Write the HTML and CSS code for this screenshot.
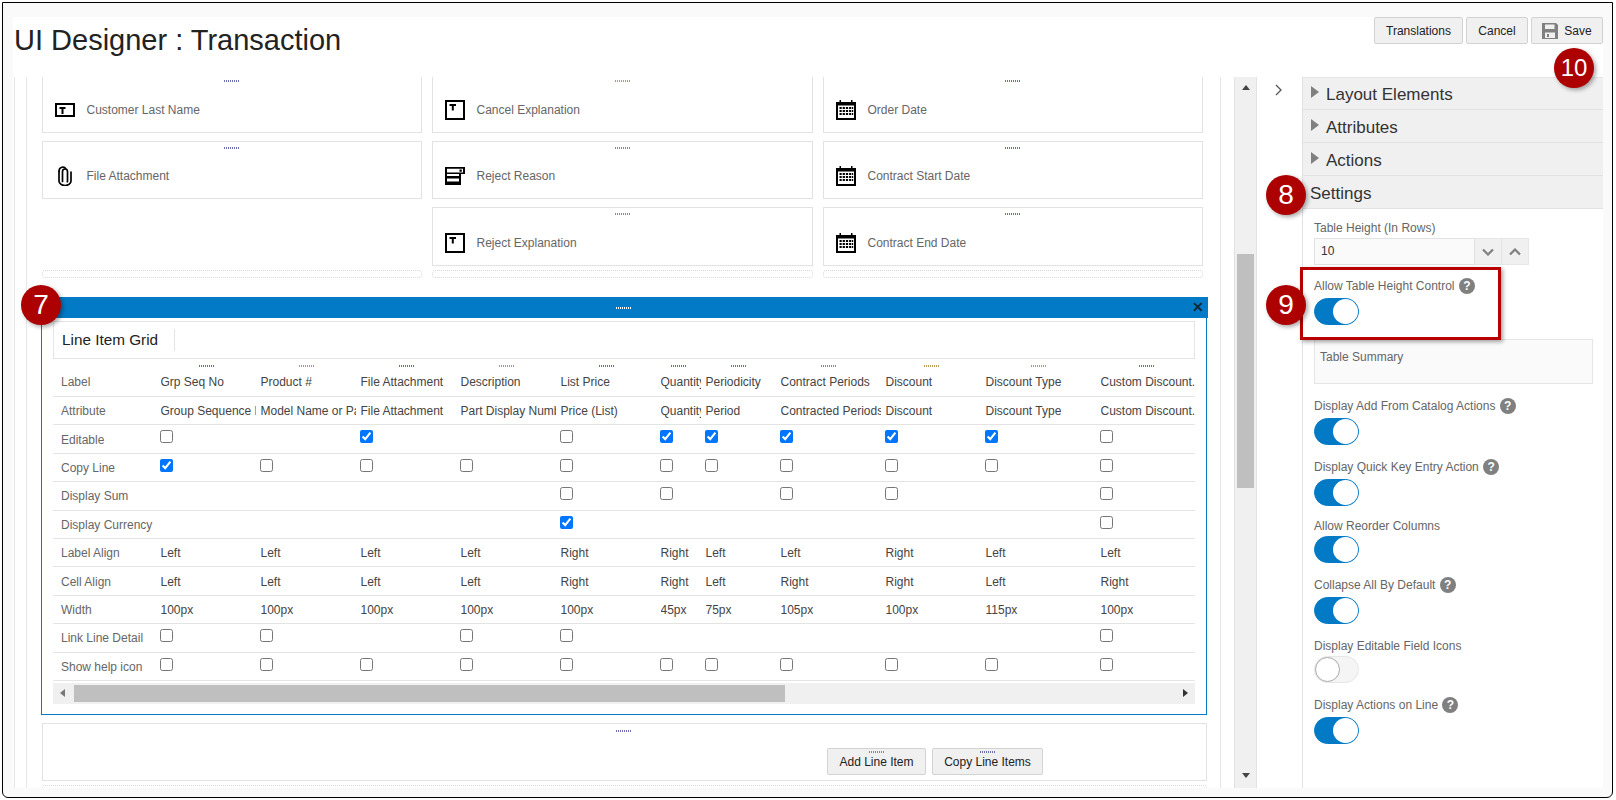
FILE: index.html
```html
<!DOCTYPE html>
<html lang="en">
<head>
<meta charset="utf-8">
<title>UI Designer : Transaction</title>
<link rel="stylesheet" href="styles.css">
</head>
<body>
<svg class="defs" width="0" height="0" aria-hidden="true">
  <symbol id="i-text-h" viewBox="0 0 20 14"><path fill-rule="evenodd" d="M0 0h20v14H0zM2 2v10h16V2z"/><path d="M4.500 4h6v2H8.500v5h-2V6h-2z"/></symbol>
  <symbol id="i-text-v" viewBox="0 0 20 20"><path fill-rule="evenodd" d="M0 0h20v20H0zM2 2v16h16V2z"/><path d="M4.500 4h6.500v2H8.800v4.500H6.800V6H4.500z"/></symbol>
  <symbol id="i-clip" viewBox="0 0 14 20"><path fill="none" stroke="#000" stroke-width="1.700" stroke-linecap="round" d="M4.500 15.500V5.500a2.500 2.500 0 0 1 5 0V15a1.700 1.700 0 0 1-.2.800M1 5.500v9.500a6 4.500 0 0 0 12 0V6"/><path fill="none" stroke="#000" stroke-width="1.700" d="M1 6V5a3.800 4 0 0 1 7-2"/></symbol>
  <symbol id="i-select" viewBox="0 0 20 18"><path fill-rule="evenodd" d="M0 0h20v7h-4v11H0zM2 1.700v3.800h16V1.700zM2 7v2h12V7zM2 11.500v3h12v-3z"/><path d="M14.500 2.500h2.300v2.200h-2.300z"/></symbol>
  <symbol id="i-cal" viewBox="0 0 20 20"><path fill-rule="evenodd" d="M0 2h3.500V0h1.500v2h10V0h1.500v2H20v18H0zM2 5.500V18h16V5.500z"/><path d="M3.500 7h2.200v2H3.500zM6.700 7h2.200v2H6.700zM9.900 7h2.200v2H9.900zM13.100 7h2.200v2h-2.200zM16 7h1.200v2H16zM3.500 10h2.200v2H3.500zM6.700 10h2.200v2H6.700zM9.900 10h2.200v2H9.900zM13.100 10h2.200v2h-2.200zM16 10h1.200v2H16zM3.500 13h2.200v2H3.500zM6.700 13h2.200v2H6.700zM9.900 13h2.200v2H9.900zM13.100 13h2.200v2h-2.200zM16 13h1.200v2H16z"/></symbol>
</svg>

<div class="frame">
  <div class="top-strip"></div>

  <header class="header">
    <h1 class="title">UI Designer : Transaction</h1>
    <div class="actions">
      <button class="btn btn-wide">Translations</button>
      <button class="btn btn-cancel">Cancel</button>
      <button class="btn btn-save">
        <svg class="save-icon" viewBox="0 0 16 16"><path fill="#808080" fill-rule="evenodd" d="M0 0h14l2 2v14H0zM3 1.500V6h9.500V1.500zM3 9.500V15h10V9.500z"/><path fill="#808080" d="M5 11h2v3H5z"/></svg>
        Save
      </button>
    </div>
  </header>

  <div class="main">
    <div class="canvas">
      <div class="scrollarea">
        <div class="cards">
          <div class="card"><i class="handle h-b"></i><div class="field"><svg class="ico ico-h"><use href="#i-text-h"/></svg><span>Customer Last Name</span></div></div>
          <div class="card"><i class="handle h-o"></i><div class="field"><svg class="ico ico-v"><use href="#i-text-v"/></svg><span>Cancel Explanation</span></div></div>
          <div class="card"><i class="handle h-b"></i><div class="field"><svg class="ico ico-v"><use href="#i-cal"/></svg><span>Order Date</span></div></div>

          <div class="card"><i class="handle h-b"></i><div class="field"><svg class="ico ico-v"><use href="#i-clip"/></svg><span>File Attachment</span></div></div>
          <div class="card"><i class="handle h-g"></i><div class="field"><svg class="ico ico-v"><use href="#i-select"/></svg><span>Reject Reason</span></div></div>
          <div class="card"><i class="handle h-b"></i><div class="field"><svg class="ico ico-v"><use href="#i-cal"/></svg><span>Contract Start Date</span></div></div>

          <div class="card-gap"></div>
          <div class="card"><i class="handle h-g"></i><div class="field"><svg class="ico ico-v"><use href="#i-text-v"/></svg><span>Reject Explanation</span></div></div>
          <div class="card"><i class="handle h-b"></i><div class="field"><svg class="ico ico-v"><use href="#i-cal"/></svg><span>Contract End Date</span></div></div>

          <div class="slot"></div>
          <div class="slot"></div>
          <div class="slot"></div>
        </div>

        <section class="grid-panel">
          <div class="grid-bar"><i class="handle h-w"></i><span class="close">✕</span></div>
          <div class="grid-body">
            <div class="grid-title"><span>Line Item Grid</span></div>
            <div class="tbl">
              <div class="row row-handles">
                <span></span>
                <span class="hc"><i class="handle h-b"></i></span><span class="hc"><i class="handle h-o"></i></span><span class="hc"><i class="handle h-b"></i></span><span class="hc"><i class="handle h-o"></i></span><span class="hc"><i class="handle h-b"></i></span><span class="hc"><i class="handle h-b"></i></span><span class="hc"><i class="handle h-b"></i></span><span class="hc"><i class="handle h-g"></i></span><span class="hc"><i class="handle h-o"></i></span><span class="hc"><i class="handle h-o"></i></span><span class="hc"><i class="handle h-b"></i></span>
              </div>
              <div class="row row-first">
                <span class="rl">Label</span><span>Grp Seq No</span><span>Product #</span><span>File Attachment</span><span>Description</span><span>List Price</span><span>Quantity</span><span>Periodicity</span><span>Contract Periods</span><span>Discount</span><span>Discount Type</span><span>Custom Discount...</span>
              </div>
              <div class="row">
                <span class="rl">Attribute</span><span>Group Sequence Number</span><span>Model Name or Part</span><span>File Attachment</span><span>Part Display Number</span><span>Price (List)</span><span>Quantity</span><span>Period</span><span>Contracted Periods</span><span>Discount</span><span>Discount Type</span><span>Custom Discount...</span>
              </div>
              <div class="row">
                <span class="rl">Editable</span><input type="checkbox"><span></span><input type="checkbox" checked><span></span><input type="checkbox"><input type="checkbox" checked><input type="checkbox" checked><input type="checkbox" checked><input type="checkbox" checked><input type="checkbox" checked><input type="checkbox">
              </div>
              <div class="row">
                <span class="rl">Copy Line</span><input type="checkbox" checked><input type="checkbox"><input type="checkbox"><input type="checkbox"><input type="checkbox"><input type="checkbox"><input type="checkbox"><input type="checkbox"><input type="checkbox"><input type="checkbox"><input type="checkbox">
              </div>
              <div class="row">
                <span class="rl">Display Sum</span><span></span><span></span><span></span><span></span><input type="checkbox"><input type="checkbox"><span></span><input type="checkbox"><input type="checkbox"><span></span><input type="checkbox">
              </div>
              <div class="row">
                <span class="rl">Display Currency</span><span></span><span></span><span></span><span></span><input type="checkbox" checked><span></span><span></span><span></span><span></span><span></span><input type="checkbox">
              </div>
              <div class="row">
                <span class="rl">Label Align</span><span>Left</span><span>Left</span><span>Left</span><span>Left</span><span>Right</span><span>Right</span><span>Left</span><span>Left</span><span>Right</span><span>Left</span><span>Left</span>
              </div>
              <div class="row">
                <span class="rl">Cell Align</span><span>Left</span><span>Left</span><span>Left</span><span>Left</span><span>Right</span><span>Right</span><span>Left</span><span>Right</span><span>Right</span><span>Left</span><span>Right</span>
              </div>
              <div class="row">
                <span class="rl">Width</span><span>100px</span><span>100px</span><span>100px</span><span>100px</span><span>100px</span><span>45px</span><span>75px</span><span>105px</span><span>100px</span><span>115px</span><span>100px</span>
              </div>
              <div class="row">
                <span class="rl">Link Line Detail</span><input type="checkbox"><input type="checkbox"><span></span><input type="checkbox"><input type="checkbox"><span></span><span></span><span></span><span></span><span></span><input type="checkbox">
              </div>
              <div class="row">
                <span class="rl">Show help icon</span><input type="checkbox"><input type="checkbox"><input type="checkbox"><input type="checkbox"><input type="checkbox"><input type="checkbox"><input type="checkbox"><input type="checkbox"><input type="checkbox"><input type="checkbox"><input type="checkbox">
              </div>
            </div>
            <div class="hscroll">
              <span class="tri tri-left"></span>
              <span class="hthumb"></span>
              <span class="tri tri-right"></span>
            </div>
          </div>
        </section>

        <div class="footer-card">
          <i class="handle h-b"></i>
          <div class="footer-actions">
            <button class="btn btn-line"><i class="handle h-g"></i>Add Line Item</button>
            <button class="btn btn-copy"><i class="handle h-b"></i>Copy Line Items</button>
          </div>
        </div>
        <div class="slot slot-wide"></div>
      </div>
    </div>

    <div class="vscroll">
      <span class="tri tri-up"></span>
      <span class="vthumb"></span>
      <span class="tri tri-down"></span>
    </div>

    <div class="chev-col">
      <svg class="chev" viewBox="0 0 8 12"><path fill="none" stroke="#555" stroke-width="1.300" d="M1 1l5 5-5 5"/></svg>
    </div>

    <aside class="panel">
      <div class="acc"><span class="tri tri-acc"></span>Layout Elements</div>
      <div class="acc"><span class="tri tri-acc"></span>Attributes</div>
      <div class="acc"><span class="tri tri-acc"></span>Actions</div>
      <div class="acc acc-open">Settings</div>

      <div class="settings">
        <div class="lbl lbl-first">Table Height (In Rows)</div>
        <div class="stepper">
          <span class="stepper-val">10</span>
          <span class="step"><svg viewBox="0 0 12 8"><path fill="none" stroke="#808080" stroke-width="2.200" d="M1 1.500l5 5 5-5"/></svg></span>
          <span class="step"><svg viewBox="0 0 12 8"><path fill="none" stroke="#808080" stroke-width="2.200" d="M1 6.500l5-5 5 5"/></svg></span>
        </div>

        <div class="opt">
          <div class="lbl lbl-help">Allow Table Height Control <b class="help">?</b></div>
          <div class="toggle"><i class="knob"></i></div>
        </div>

        <div class="summary">Table Summary</div>

        <div class="opt">
          <div class="lbl lbl-help">Display Add From Catalog Actions <b class="help">?</b></div>
          <div class="toggle"><i class="knob"></i></div>
        </div>
        <div class="opt">
          <div class="lbl lbl-help">Display Quick Key Entry Action <b class="help">?</b></div>
          <div class="toggle"><i class="knob"></i></div>
        </div>
        <div class="opt">
          <div class="lbl">Allow Reorder Columns</div>
          <div class="toggle"><i class="knob"></i></div>
        </div>
        <div class="opt opt-tall">
          <div class="lbl lbl-help">Collapse All By Default <b class="help">?</b></div>
          <div class="toggle"><i class="knob"></i></div>
        </div>
        <div class="opt">
          <div class="lbl">Display Editable Field Icons</div>
          <div class="toggle toggle-off"><i class="knob"></i></div>
        </div>
        <div class="opt">
          <div class="lbl lbl-help">Display Actions on Line <b class="help">?</b></div>
          <div class="toggle"><i class="knob"></i></div>
        </div>
      </div>
    </aside>
  </div>

  <div class="highlight"></div>
  <div class="badge badge-7">7</div>
  <div class="badge badge-8">8</div>
  <div class="badge badge-9">9</div>
  <div class="badge badge-10">10</div>
</div>
</body>
</html>
```

FILE: styles.css
```css
* { box-sizing: border-box; }
html, body { margin: 0; padding: 0; background: #fff; overflow: hidden; }
body { width: 1616px; height: 800px; font-family: "Liberation Sans", Arial, sans-serif; font-size: 12px; color: #333; }
.defs { position: absolute; }

.frame {
  position: relative;
  width: 1611px;
  height: 796px;
  margin: 2px 0 0 2px;
  border: 1px solid #000;
  border-radius: 0 0 6px 6px;
  background: #fafafa;
  display: flex;
  flex-direction: column;
  overflow: hidden;
}
.top-strip { height: 14px; flex: none; }

.header {
  flex: none;
  height: 60px;
  margin: 0 9px 0 10px;
  background: #fff;
  display: flex;
  justify-content: space-between;
  align-items: flex-start;
}
.title { margin: 6px 0 0 1px; font-size: 29px; line-height: 34px; font-weight: 400; color: #222; }
.actions { display: flex; gap: 3px; }

.btn {
  height: 27px;
  padding: 0;
  border: 1px solid #d2d2d2;
  border-radius: 2px;
  background: #f0f0f0;
  color: #222;
  font: 12px "Liberation Sans", Arial, sans-serif;
  display: flex;
  align-items: center;
  justify-content: center;
  position: relative;
}
.btn-wide { width: 89px; }
.btn-cancel { width: 62px; }
.btn-save { width: 72px; gap: 6px; }
.save-icon { width: 16px; height: 16px; }

.main {
  flex: none;
  height: 711px;
  margin: 0 9px 0 10px;
  background: #fff;
  display: flex;
}

.canvas {
  flex: none;
  width: 1208px;
  padding-left: 1px;
  border-right: 1px solid #e6e6e6;
  overflow: hidden;
}
.scrollarea {
  width: 1193px;
  height: 714px;
  margin-top: -3px;
  padding: 0 0 0 27px;
  border-left: 1px solid #e6e6e6;
  background: linear-gradient(#e6e6e6, #e6e6e6) 11px 0 / 1px 100% no-repeat;
}

.cards {
  display: grid;
  grid-template-columns: 380px 381px 380px;
  grid-template-rows: 58.500px 58.500px 58.500px 8px;
  column-gap: 10px;
  row-gap: 8px;
}
.card {
  border: 1px solid #e2e2e2;
  background: #fff;
  position: relative;
  display: flex;
  align-items: center;
}
.field { display: flex; align-items: center; padding: 13px 0 0 12px; color: #666; }
.ico { width: 20px; height: 20px; margin-right: 11.500px; flex: none; }
.ico-h { height: 14px; }
.handle {
  display: block;
  width: 16px;
  height: 2px;
  background-repeat: repeat-x;
}
.card > .handle { position: absolute; top: 5px; left: 50%; margin-left: -8px; }
.h-b { background-image: repeating-linear-gradient(90deg, #6a6fa8 0 1px, transparent 1px 2px); }
.h-o { background-image: repeating-linear-gradient(90deg, #b89a5c 0 1px, transparent 1px 2px); }
.h-g { background-image: repeating-linear-gradient(90deg, #8a8a8a 0 1px, transparent 1px 2px); }
.h-w { background-image: repeating-linear-gradient(90deg, #fff 0 1px, transparent 1px 2px); }

.slot {
  height: 8px;
  margin-top: -3.500px;
  border: 1px dotted #d8d8d8;
  border-radius: 3px;
}

.grid-panel {
  width: 1166px;
  height: 418px;
  margin: 15.500px 0 0 -1px;
  border: 1.500px solid #0a7ac2;
  border-top: 0;
}
.grid-bar {
  height: 21px;
  margin: 0 -1.500px;
  background: #027ac6;
  display: flex;
  align-items: center;
  justify-content: center;
  position: relative;
}
.close { position: absolute; right: 4px; top: 1px; font-size: 14px; line-height: 18px; font-weight: 700; color: #0f2a3d; }
.grid-body { padding: 3px 0 0 11px; width: 1154px; }
.grid-title {
  height: 38px;
  border: 1px solid #e4e4e4;
  display: flex;
  align-items: center;
  padding-left: 8px;
  width: 1142px;
}
.grid-title span {
  font-size: 15.300px;
  color: #222;
  height: 22px;
  line-height: 22px;
  padding-right: 16px;
  border-right: 1px solid #e4e4e4;
}

.tbl { width: 1142px; overflow: hidden; }
.row {
  display: grid;
  grid-template-columns: 107.500px 100px 100px 100px 100px 100px 45px 75px 105px 100px 115px 100px;
  height: 28.400px;
  align-items: center;
  border-bottom: 1px solid #e4e4e4;
  width: 1147.500px;
}
.row > span { margin-right: 5px; padding-top: 2px; white-space: nowrap; overflow: hidden; color: #444; line-height: 15px; }
.row > .rl { margin: 0 0 0 8px; color: #666; }
.row > input { margin: 5px 0 0 -1px; width: 13px; height: 13px; align-self: start; }
.row-handles { height: 9px; border-bottom: 0; align-items: end; }
.row-handles > .hc { margin-right: 8px; display: flex; justify-content: center; overflow: visible; height: 9px; padding-top: 6px; }
.row-first { height: 29px; }
.row-first > span { padding-top: 0; }

.hscroll {
  width: 1142px;
  height: 21px;
  margin-top: 2px;
  background: #f0f0f0;
  display: flex;
  align-items: center;
  position: relative;
}
.hthumb { width: 711px; height: 17px; margin-left: 20.500px; background: #bfbfbf; }
.tri { display: block; width: 0; height: 0; flex: none; border-style: solid; border-color: transparent; }
.tri-left { position: absolute; left: 7px; top: 6px; border-width: 4.500px 5px 4.500px 0; border-right-color: #777; }
.tri-right { position: absolute; right: 7px; top: 6px; border-width: 4.500px 0 4.500px 5px; border-left-color: #333; }

.footer-card {
  width: 1165px;
  height: 58px;
  margin-top: 8px;
  border: 1px solid #e2e2e2;
  position: relative;
  display: flex;
  justify-content: flex-end;
}
.footer-card > .handle { position: absolute; top: 6px; left: 50%; margin-left: -8.500px; }
.footer-actions { display: flex; gap: 6px; margin: 24px 163px 0 0; }
.btn-line { width: 99px; }
.btn-copy { width: 111px; }
.btn > .handle { position: absolute; top: 2px; left: 50%; margin-left: -8px; }
.slot-wide { width: 1165px; height: 8px; margin-top: 4px; }

.vscroll {
  flex: none;
  width: 23px;
  margin-left: 13px;
  background: #f0f0f0;
  border-left: 1px solid #e2e2e2;
  border-right: 1px solid #e2e2e2;
  display: flex;
  flex-direction: column;
  align-items: center;
}
.tri-up { margin-top: 8px; border-width: 0 4.500px 5px; border-bottom-color: #444; }
.vthumb { width: 17px; height: 234px; margin-top: 164px; background: #bfbfbf; }
.tri-down { margin-top: auto; margin-bottom: 10px; border-width: 5px 4.500px 0; border-top-color: #444; }

.chev-col { flex: none; width: 45px; display: flex; justify-content: center; padding-top: 7px; }
.chev { width: 8px; height: 12px; margin-left: -2px; }

.panel { flex: none; width: 301px; border-left: 1px solid #e2e2e2; }
.acc {
  height: 33px;
  padding: 4px 0 0 8px;
  background: #f0f0f0;
  border-bottom: 1px solid #e2e2e2;
  font-size: 17px;
  line-height: 28px;
  color: #333;
  display: flex;
  align-items: center;
}
.acc:first-child { border-top: 1px solid #e6e6e6; padding-top: 3px; }
.acc-open { padding-left: 7px; }
.tri-acc { margin: -6px 7px 0 0; border-width: 6.500px 0 6.500px 8px; border-left-color: #808080; }

.settings { padding: 12px 0 0 11px; }
.lbl { height: 14px; line-height: 14px; color: #666; display: flex; align-items: center; white-space: pre; }
.lbl-first { margin-bottom: 3px; }
.lbl-help { height: 18px; }
.help {
  width: 16px;
  height: 16px;
  margin-left: 1px;
  border-radius: 50%;
  background: #808080;
  color: #fff;
  font-size: 12px;
  line-height: 16px;
  text-align: center;
}
.stepper { display: flex; width: 215px; height: 27px; margin-bottom: 12px; }
.stepper-val {
  width: 162px;
  padding-left: 6px;
  line-height: 25px;
  background: #fafafa;
  border: 1px solid #e2e2e2;
  color: #333;
}
.step {
  width: 27px;
  background: #f0f0f0;
  border: 1px solid #e6e6e6;
  border-left: 0;
  display: flex;
  align-items: center;
  justify-content: center;
}
.step svg { width: 12px; height: 8px; }

.opt { margin-bottom: 13px; }
.opt-tall { margin-bottom: 15px; }
.opt .lbl { margin-bottom: 3px; }
.toggle {
  position: relative;
  width: 45px;
  height: 27px;
  border-radius: 14px;
  background: #027ac6;
  border: 1px solid #027ac6;
}
.knob {
  position: absolute;
  right: 0;
  top: 0;
  width: 25px;
  height: 25px;
  border-radius: 50%;
  background: #fff;
}
.toggle-off { background: #f5f5f5; border-color: #e6e6e6; }
.toggle-off .knob { right: auto; left: 0; border: 1px solid #aaa; }

.summary {
  width: 279px;
  height: 45px;
  margin: 14px 0 13px 0;
  padding: 10px 5px 0;
  background: #fafafa;
  border: 1px solid #e6e6e6;
  color: #666;
}

.highlight {
  position: absolute;
  left: 1297px;
  top: 264px;
  width: 201px;
  height: 73px;
  border: 3px solid #b80000;
  box-shadow: 2px 2px 4px rgba(0, 0, 0, .35);
}
.badge {
  position: absolute;
  width: 40px;
  height: 40px;
  border-radius: 50%;
  background: #ad0000;
  color: #fff;
  font-size: 28px;
  line-height: 40px;
  text-align: center;
  box-shadow: 2px 2px 4px rgba(0, 0, 0, .35);
}
.badge-7 { left: 18px; top: 282px; }
.badge-8 { left: 1263px; top: 172px; }
.badge-9 { left: 1263px; top: 282px; }
.badge-10 { left: 1551px; top: 45px; font-size: 24px; }
```
